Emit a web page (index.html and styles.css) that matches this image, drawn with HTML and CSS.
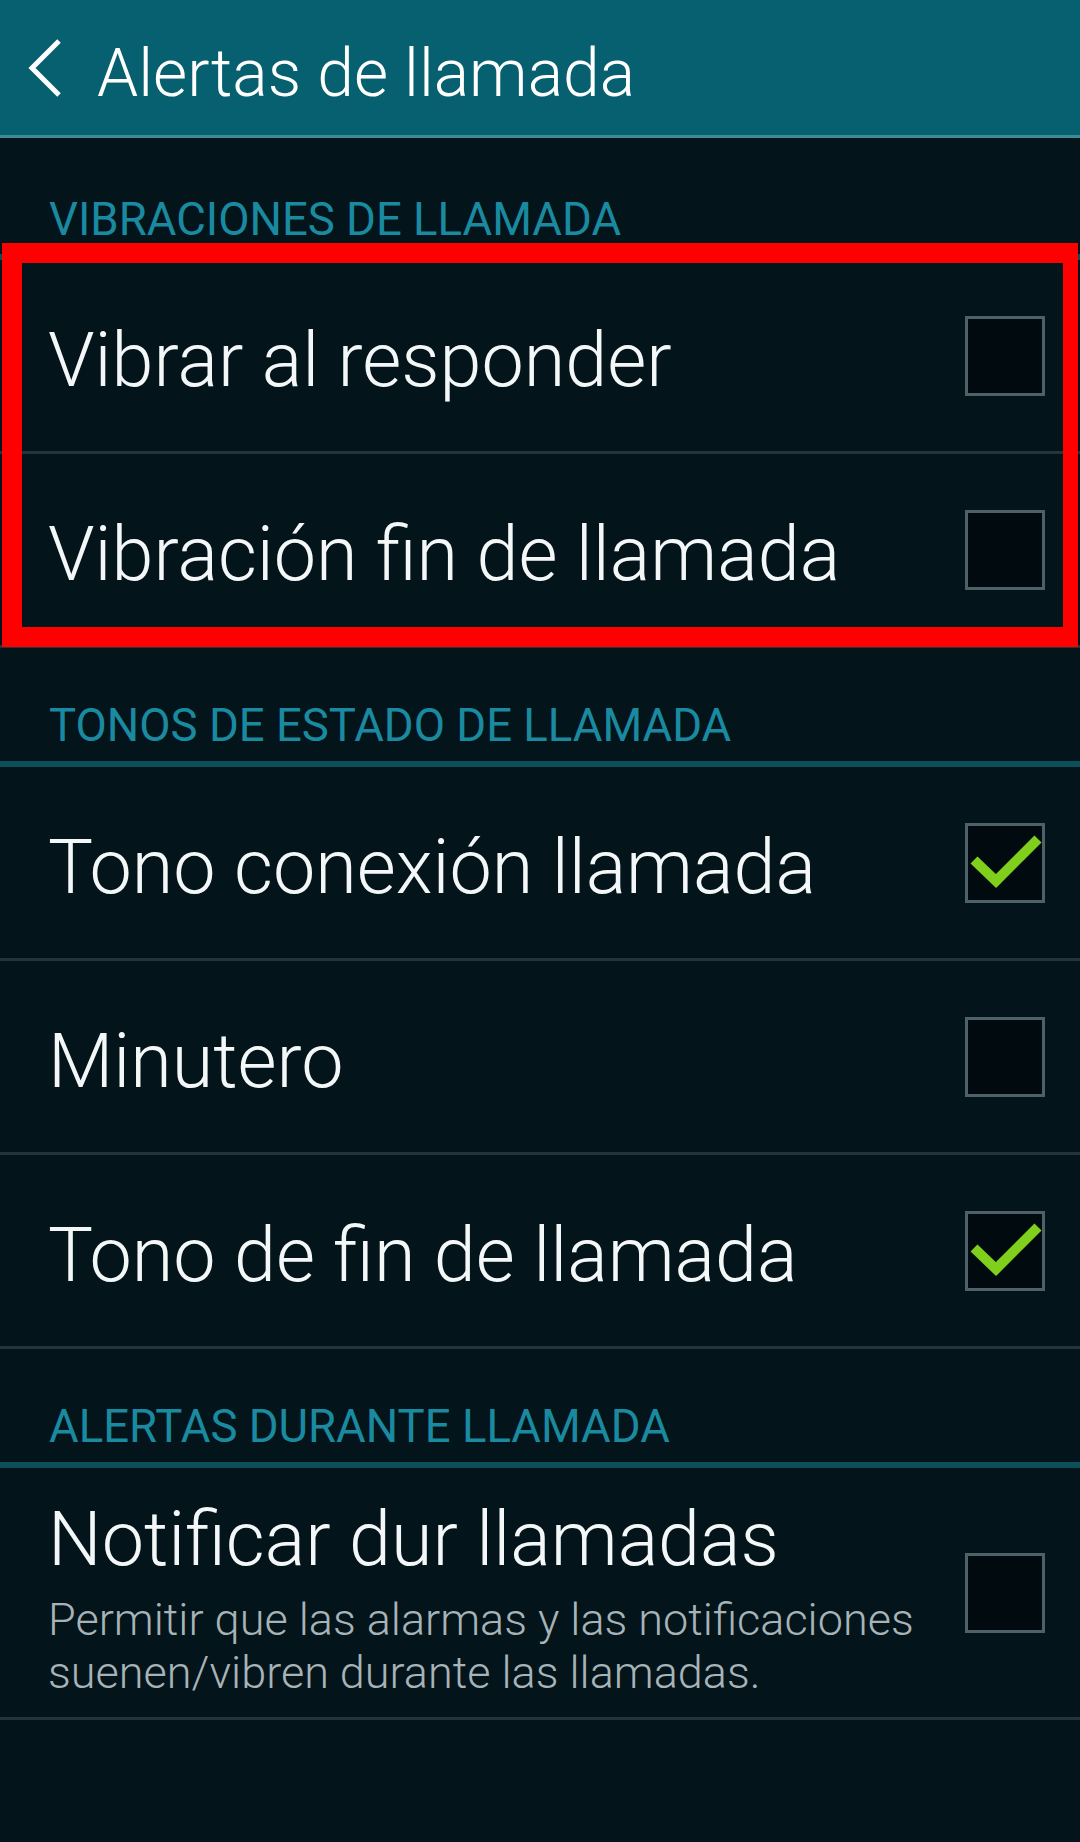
FILE: index.html
```html
<!DOCTYPE html>
<html lang="es">
<head>
<meta charset="utf-8">
<title>Alertas de llamada</title>
<link rel="stylesheet" href="styles.css">
</head>
<body>
<div class="screen">
  <header class="appbar">
    <svg class="back" width="40" height="60" viewBox="0 0 40 60" aria-hidden="true">
      <path d="M34 3 L7 30 L34 57" fill="none" stroke="#ffffff" stroke-width="5" stroke-linejoin="miter"/>
    </svg>
    <h1 class="appbar-title">Alertas de llamada</h1>
  </header>

  <section class="group group-first">
    <h2 class="group-head">VIBRACIONES DE LLAMADA</h2>
    <div class="row">
      <span class="row-label">Vibrar al responder</span>
      <svg class="check" width="80" height="80" viewBox="0 0 80 80"><rect x="1.5" y="1.5" width="77" height="77"/></svg>
    </div>
    <div class="row">
      <span class="row-label">Vibración fin de llamada</span>
      <svg class="check" width="80" height="80" viewBox="0 0 80 80"><rect x="1.5" y="1.5" width="77" height="77"/></svg>
    </div>
    <div class="highlight"></div>
  </section>

  <section class="group">
    <h2 class="group-head">TONOS DE ESTADO DE LLAMADA</h2>
    <div class="row">
      <span class="row-label">Tono conexión llamada</span>
      <svg class="check on" width="80" height="80" viewBox="0 0 80 80"><rect x="1.5" y="1.5" width="77" height="77"/><path d="M9 37 L31 58 L73 16"/></svg>
    </div>
    <div class="row">
      <span class="row-label">Minutero</span>
      <svg class="check" width="80" height="80" viewBox="0 0 80 80"><rect x="1.5" y="1.5" width="77" height="77"/></svg>
    </div>
    <div class="row">
      <span class="row-label">Tono de fin de llamada</span>
      <svg class="check on" width="80" height="80" viewBox="0 0 80 80"><rect x="1.5" y="1.5" width="77" height="77"/><path d="M9 37 L31 58 L73 16"/></svg>
    </div>
  </section>

  <section class="group">
    <h2 class="group-head">ALERTAS DURANTE LLAMADA</h2>
    <div class="row row-tall">
      <div class="row-text">
        <span class="row-label">Notificar dur llamadas</span>
        <p class="row-sub">Permitir que las alarmas y las notificaciones suenen/vibren durante las llamadas.</p>
      </div>
      <svg class="check" width="80" height="80" viewBox="0 0 80 80"><rect x="1.5" y="1.5" width="77" height="77"/></svg>
    </div>
  </section>
</div>
</body>
</html>
```

FILE: styles.css
```css
* { box-sizing: border-box; }

html, body {
  margin: 0;
  padding: 0;
  background: #03141b;
}

body {
  font-family: Roboto, "Noto Sans", "Liberation Sans", sans-serif;
  color: #f3f7f8;
}

.screen {
  width: 1080px;
  height: 1842px;
  overflow: hidden;
  background: #03141b;
}

/* top bar */
.appbar {
  height: 138px;
  background: #07606f;
  border-bottom: 3px solid #3d8b95;
  display: flex;
  align-items: center;
  padding: 12px 0 0 25px;
}

.back {
  flex: none;
  margin-top: -12px;
}

.appbar-title {
  margin: 0 0 0 32px;
  font-size: 66px;
  line-height: 66px;
  font-weight: 300;
  color: #ffffff;
}

/* groups */
.group {
  position: relative;
}

.group-head {
  margin: 0;
  height: 119px;
  padding: 56px 0 0 49px;
  font-size: 45.5px;
  line-height: 44px;
  font-weight: 400;
  color: #1a8aa0;
  border-bottom: 6px solid #0c4f58;
}

.group-first .group-head {
  height: 122px;
  padding-top: 60px;
}

.row {
  height: 194px;
  display: flex;
  align-items: center;
  justify-content: space-between;
  padding: 0 35px 0 48px;
  border-bottom: 3px solid #23343a;
}

.row-label {
  padding-top: 8px;
  font-size: 75.5px;
  line-height: 88px;
  font-weight: 300;
  color: #f3f7f8;
  white-space: nowrap;
}

.row-tall {
  height: 252px;
  align-items: flex-start;
}

.row-tall .check {
  align-self: center;
}

.row-text {
  display: flex;
  flex-direction: column;
  padding-top: 27px;
}

.row-tall .row-label {
  padding-top: 0;
}

.row-sub {
  margin: 10px 0 0;
  width: 910px;
  font-size: 45px;
  line-height: 53px;
  font-weight: 300;
  color: #a7b3b7;
}

/* checkboxes */
.check {
  flex: none;
  display: block;
}

.check rect {
  fill: #010b0f;
  stroke: #4f6168;
  stroke-width: 3;
}

.check path {
  fill: none;
  stroke: #7fcf1c;
  stroke-width: 10;
  stroke-linecap: butt;
  stroke-linejoin: miter;
}

/* red annotation frame drawn over the first group */
.highlight {
  position: absolute;
  left: 2px;
  top: 105px;
  width: 1076px;
  height: 404px;
  border: 20px solid #ff0000;
  border-right-width: 15px;
  pointer-events: none;
}
```
